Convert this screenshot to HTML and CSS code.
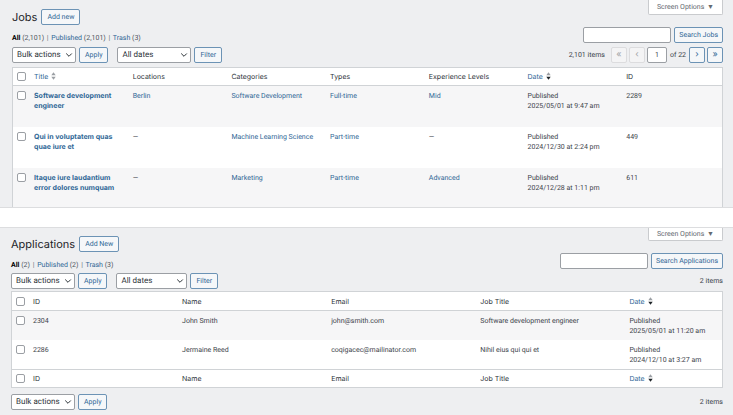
FILE: index.html
```html
<!DOCTYPE html>
<html lang="en">
<head>
    <meta charset="UTF-8">
    <meta name="viewport" content="width=device-width, initial-scale=1.0">
    <title>Jobs and Applications</title>
    <link rel="stylesheet" href="styles.css">
</head>
<body>
    <svg class="sprite" aria-hidden="true">
        <symbol id="chevron" viewBox="0 0 8 8"><path d="M1.2 2.5 4 5.3 6.8 2.5" fill="none" stroke="currentColor" stroke-width="1"/></symbol>
        <symbol id="sort-up" viewBox="0 0 5 8"><path d="M0.3 3.3 2.5 0.3 4.7 3.3z"/></symbol>
        <symbol id="sort-down" viewBox="0 0 5 8"><path d="M0.3 4.7 2.5 7.7 4.7 4.7z"/></symbol>
    </svg>

    <section class="panel jobs">
        <header class="panel-head">
            <div class="head-left">
                <div class="title-row">
                    <h1>Jobs</h1>
                    <a href="#" class="btn">Add new</a>
                </div>
                <nav class="views">
                    <a href="#" class="current">All <span>(2,101)</span></a> <i>|</i>
                    <a href="#">Published <span>(2,101)</span></a> <i>|</i>
                    <a href="#">Trash <span>(3)</span></a>
                </nav>
            </div>
            <div class="head-right">
                <button type="button" class="screen-options">Screen Options <span>▼</span></button>
                <form class="search">
                    <input type="search" class="field" aria-label="Search Jobs">
                    <button type="button" class="btn">Search Jobs</button>
                </form>
            </div>
        </header>

        <div class="tablenav">
            <div class="select bulk">
                <select aria-label="Bulk actions"><option>Bulk actions</option></select>
                <svg><use href="#chevron"/></svg>
            </div>
            <button type="button" class="btn">Apply</button>
            <div class="select dates">
                <select aria-label="Filter by date"><option>All dates</option></select>
                <svg><use href="#chevron"/></svg>
            </div>
            <button type="button" class="btn">Filter</button>
            <div class="pages">
                <span class="count">2,101 items</span>
                <button type="button" class="btn" disabled aria-label="First page">«</button>
                <button type="button" class="btn" disabled aria-label="Previous page">‹</button>
                <input type="text" class="field page" value="1" aria-label="Current page">
                <span class="total">of 22</span>
                <button type="button" class="btn" aria-label="Next page">›</button>
                <button type="button" class="btn" aria-label="Last page">»</button>
            </div>
        </div>

        <table class="list">
            <thead>
                <tr>
                    <th class="check"><input type="checkbox" aria-label="Select all"></th>
                    <th><a href="#">Title <svg class="sort"><use href="#sort-up"/><use href="#sort-down"/></svg></a></th>
                    <th>Locations</th>
                    <th>Categories</th>
                    <th>Types</th>
                    <th>Experience Levels</th>
                    <th><a href="#">Date <svg class="sort desc"><use href="#sort-up"/><use href="#sort-down"/></svg></a></th>
                    <th>ID</th>
                </tr>
            </thead>
            <tbody>
                <tr>
                    <td class="check"><input type="checkbox" aria-label="Select Software development engineer"></td>
                    <td><a href="#" class="row-title">Software development engineer</a></td>
                    <td><a href="#">Berlin</a></td>
                    <td><a href="#">Software Development</a></td>
                    <td><a href="#">Full-time</a></td>
                    <td><a href="#">Mid</a></td>
                    <td>Published<br>2025/05/01 at 9:47 am</td>
                    <td>2289</td>
                </tr>
                <tr>
                    <td class="check"><input type="checkbox" aria-label="Select Qui in voluptatem quas quae iure et"></td>
                    <td><a href="#" class="row-title">Qui in voluptatem quas quae iure et</a></td>
                    <td>—</td>
                    <td><a href="#">Machine Learning Science</a></td>
                    <td><a href="#">Part-time</a></td>
                    <td>—</td>
                    <td>Published<br>2024/12/30 at 2:24 pm</td>
                    <td>449</td>
                </tr>
                <tr>
                    <td class="check"><input type="checkbox" aria-label="Select Itaque iure laudantium error dolores numquam"></td>
                    <td><a href="#" class="row-title">Itaque iure laudantium error dolores numquam</a></td>
                    <td>—</td>
                    <td><a href="#">Marketing</a></td>
                    <td><a href="#">Part-time</a></td>
                    <td><a href="#">Advanced</a></td>
                    <td>Published<br>2024/12/28 at 1:11 pm</td>
                    <td>611</td>
                </tr>
            </tbody>
        </table>
    </section>

    <section class="panel applications">
        <header class="panel-head">
            <div class="head-left">
                <div class="title-row">
                    <h1>Applications</h1>
                    <a href="#" class="btn">Add New</a>
                </div>
                <nav class="views">
                    <a href="#" class="current">All <span>(2)</span></a> <i>|</i>
                    <a href="#">Published <span>(2)</span></a> <i>|</i>
                    <a href="#">Trash <span>(3)</span></a>
                </nav>
            </div>
            <div class="head-right">
                <button type="button" class="screen-options">Screen Options <span>▼</span></button>
                <form class="search">
                    <input type="search" class="field" aria-label="Search Applications">
                    <button type="button" class="btn">Search Applications</button>
                </form>
            </div>
        </header>

        <div class="tablenav">
            <div class="select bulk">
                <select aria-label="Bulk actions"><option>Bulk actions</option></select>
                <svg><use href="#chevron"/></svg>
            </div>
            <button type="button" class="btn">Apply</button>
            <div class="select dates">
                <select aria-label="Filter by date"><option>All dates</option></select>
                <svg><use href="#chevron"/></svg>
            </div>
            <button type="button" class="btn">Filter</button>
            <div class="pages">2 items</div>
        </div>

        <table class="list">
            <thead>
                <tr>
                    <th class="check"><input type="checkbox" aria-label="Select all"></th>
                    <th>ID</th>
                    <th>Name</th>
                    <th>Email</th>
                    <th>Job Title</th>
                    <th class="date"><a href="#">Date <svg class="sort desc"><use href="#sort-up"/><use href="#sort-down"/></svg></a></th>
                </tr>
            </thead>
            <tbody>
                <tr>
                    <td class="check"><input type="checkbox" aria-label="Select 2304"></td>
                    <td>2304</td>
                    <td>John Smith</td>
                    <td>john@smith.com</td>
                    <td>Software development engineer</td>
                    <td>Published<br>2025/05/01 at 11:20 am</td>
                </tr>
                <tr>
                    <td class="check"><input type="checkbox" aria-label="Select 2286"></td>
                    <td>2286</td>
                    <td>Jermaine Reed</td>
                    <td>coqigacec@mailinator.com</td>
                    <td>Nihil eius qui qui et</td>
                    <td>Published<br>2024/12/10 at 3:27 am</td>
                </tr>
            </tbody>
            <tfoot>
                <tr>
                    <th class="check"><input type="checkbox" aria-label="Select all"></th>
                    <th>ID</th>
                    <th>Name</th>
                    <th>Email</th>
                    <th>Job Title</th>
                    <th><a href="#">Date <svg class="sort desc"><use href="#sort-up"/><use href="#sort-down"/></svg></a></th>
                </tr>
            </tfoot>
        </table>

        <div class="tablenav bottom">
            <div class="select bulk">
                <select aria-label="Bulk actions"><option>Bulk actions</option></select>
                <svg><use href="#chevron"/></svg>
            </div>
            <button type="button" class="btn">Apply</button>
            <div class="pages">2 items</div>
        </div>
    </section>
</body>
</html>
```
FILE: styles.css
```css
* {
    box-sizing: border-box;
}
body {
    margin: 0;
    background: #fff;
    color: #3c434a;
    font: 7px/10px Roboto, "Liberation Sans", sans-serif;
    text-rendering: geometricPrecision;
}
a {
    color: #2f6796;
    text-decoration: none;
}
button, input, select {
    margin: 0;
    font: inherit;
    color: inherit;
    text-rendering: inherit;
}
.sprite {
    position: absolute;
    width: 0;
    height: 0;
}
.panel {
    padding: 0 10px 0 11px;
    background: #eeeff1;
}
.jobs {
    padding-left: 12px;
    border-bottom: 1px solid #dcdddf;
    margin-bottom: 19px;
}
.applications {
    border-top: 1px solid #dcdddf;
    padding-bottom: 6px;
}
.panel-head {
    display: flex;
    justify-content: space-between;
}
.head-left {
    padding-top: 9px;
}
.applications .head-left {
    padding-top: 8px;
}
.title-row {
    display: flex;
    align-items: center;
    gap: 4px;
}
h1 {
    margin: 0;
    font-family: Inter, "Liberation Sans", sans-serif;
    font-size: 11px;
    line-height: 16px;
    font-weight: 400;
    color: #1d2327;
}
.views {
    margin-top: 8px;
    color: #646970;
}
.views span {
    color: #50575e;
}
.views i {
    font-style: normal;
    margin: 0 1px;
}
.views .current {
    color: #000;
    font-weight: 700;
}
.views .current span {
    font-weight: 400;
}
.head-right {
    display: flex;
    flex-direction: column;
    align-items: flex-end;
    gap: 12px;
}
.screen-options {
    height: 15px;
    padding: 0 8px;
    background: #fff;
    border: 1px solid #c9cbce;
    border-top: 0;
    border-radius: 0 0 2px 2px;
    color: #646970;
}
.applications .screen-options {
    height: 13px;
}
.screen-options span {
    margin-left: 1px;
}
.search {
    display: flex;
    gap: 3px;
}
.field {
    width: 88px;
    height: 16px;
    padding: 0 4px;
    border: 1px solid #9b9fa4;
    border-radius: 2px;
    background: #fff;
    appearance: none;
}
.btn {
    display: inline-block;
    height: 16px;
    padding: 0 5px;
    border: 1px solid #6c93b5;
    border-radius: 2px;
    background: #f5f7f9;
    color: #2f6796;
    line-height: 14px;
    white-space: nowrap;
}
.search .btn {
    padding: 0 4px;
}
.tablenav {
    display: flex;
    align-items: center;
    gap: 3px;
    margin: 4px 0;
}
.applications .tablenav {
    margin: 3px 0 2px;
}
.applications .bottom {
    margin: 6px 0 0;
}
.select {
    position: relative;
    color: #2c3338;
}
.select select {
    display: block;
    width: 100%;
    height: 16px;
    padding: 0 4px;
    font-size: 8px;
    border: 1px solid #9b9fa4;
    border-radius: 2px;
    background: #fff;
    appearance: none;
}
.select svg {
    position: absolute;
    right: 3px;
    top: 4px;
    width: 8px;
    height: 8px;
    pointer-events: none;
}
.bulk {
    width: 64px;
}
.dates {
    width: 74px;
    margin-left: 6px;
}
.applications .dates {
    width: 71px;
}
.pages {
    display: flex;
    align-items: center;
    gap: 2px;
    margin-left: auto;
}
.pages .btn {
    width: 16px;
    padding: 0;
    text-align: center;
    font-family: Inter, "Liberation Sans", sans-serif;
    font-size: 9px;
}
.pages .btn:disabled {
    border-color: #dcdcde;
    background: #f4f4f5;
    color: #a0a2a5;
}
.count {
    margin-right: 4px;
}
.page {
    width: 20px;
    text-align: center;
}
.total {
    margin: 0 1px;
}
.list {
    width: 100%;
    border: 1px solid #d0d3d6;
    border-collapse: separate;
    border-spacing: 0;
    table-layout: fixed;
    background: #fff;
}
.jobs .list {
    border-bottom: 0;
}
th, td {
    text-align: left;
    vertical-align: top;
    font-weight: 400;
}
th {
    padding: 4px 3px;
    color: #2c3338;
    border-bottom: 1px solid #d0d3d6;
    font-family: Inter, "Liberation Sans", sans-serif;
    line-height: 9px;
}
.applications th {
    width: 21%;
    padding-top: 5px;
}
.applications .date {
    width: auto;
}
.applications tfoot th {
    padding: 4px 3px;
    border-top: 1px solid #d0d3d6;
    border-bottom: 0;
}
td {
    height: 29px;
    padding: 5px 3px 4px;
}
.jobs td {
    height: 41px;
}
.jobs tr:last-child td {
    height: 39px;
}
tbody tr:nth-child(odd) {
    background: #f6f6f7;
}
.list .check {
    width: 18px;
    padding-left: 4px;
}
.check input {
    display: block;
    width: 9px;
    height: 9px;
    margin: 0;
    border: 1px solid #9b9fa4;
    border-radius: 2px;
    background: #fff;
    appearance: none;
}
.row-title {
    font-family: Inter, "Liberation Sans", sans-serif;
    font-weight: 700;
}
.sort {
    width: 5px;
    height: 8px;
    margin-left: 1px;
    vertical-align: -1px;
    fill: #9b9fa4;
}
.sort.desc use:last-child {
    fill: #1d2327;
}
```
